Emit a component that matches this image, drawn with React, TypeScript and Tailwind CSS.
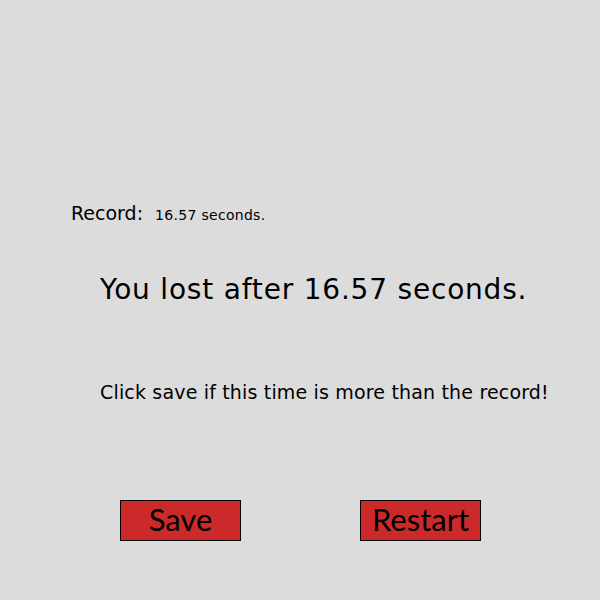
export default function App() {
  const btn =
    "w-[121px] h-[41px] bg-[#cc2a2a] border border-black text-[31px] leading-[37px] pb-[2px] text-black";
  return (
    <div className="w-[600px] h-[600px] bg-[#dcdcdc] text-black flex flex-col" style={{ fontFamily: '"DejaVu Sans", sans-serif' }}>
      <div className="mt-[204px] ml-[71px] flex items-baseline">
        <span className="text-[19px] leading-none">Record:</span>
        <span className="ml-[12px] text-[14px] leading-none tracking-[0.3px]">16.57 seconds.</span>
      </div>
      <div className="mt-[53px] ml-[100px] text-[28px] leading-none tracking-[0.8px]">You lost after 16.57 seconds.</div>
      <div className="mt-[79px] ml-[100px] text-[19px] leading-none tracking-[0.17px]">Click save if this time is more than the record!</div>
      <div className="mt-[98px] flex" style={{ fontFamily: 'Lato, sans-serif' }}>
        <button className={`ml-[120px] ${btn}`}>Save</button>
        <button className={`ml-[119px] ${btn}`}>Restart</button>
      </div>
    </div>
  );
}
